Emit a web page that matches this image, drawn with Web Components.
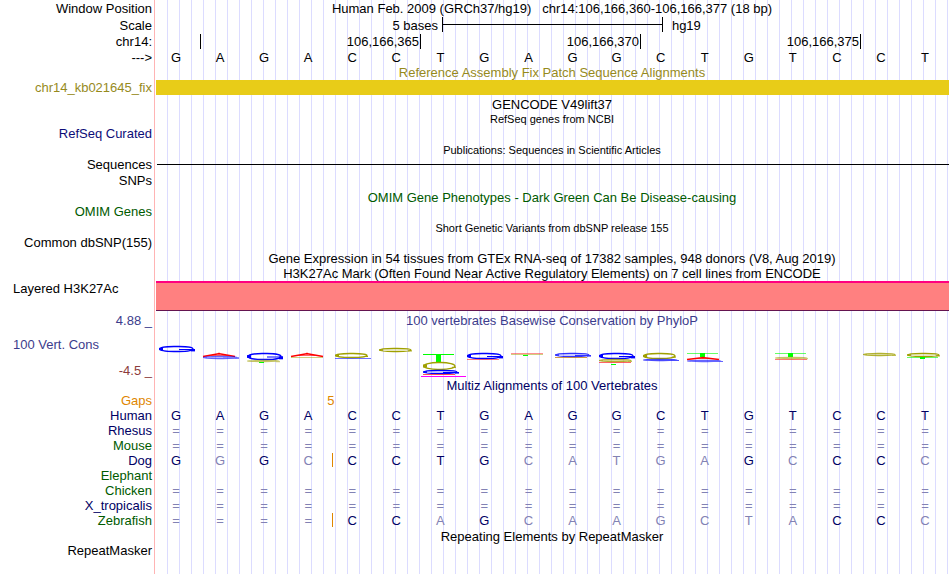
<!DOCTYPE html>
<html lang="en">
<head>
<meta charset="utf-8">
<title>Human chr14:106,166,360-106,166,377</title>
<style>
    body {
        margin: 0;
        background: #fff;
        font-family: "Liberation Sans", Arial, sans-serif;
        font-size: 13px;
    }
</style>
</head>
<body>
<genome-browser>
    <track-row label="Window Position" size="17"><track-title>Human Feb. 2009 (GRCh37/hg19) &nbsp; chr14:106,166,360-106,166,377 (18 bp)</track-title></track-row>
    <track-row label="Scale" size="17"><scale-bar left="5 bases" right="hg19"></scale-bar></track-row>
    <track-row label="chr14:" size="16"><position-ruler></position-ruler></track-row>
    <track-row label="---&gt;" size="15"><base-row bases="GAGACCTGAGGCTGTCCT" color="#000"></base-row></track-row>

    <track-row size="15"><track-title color="#968a1c">Reference Assembly Fix Patch Sequence Alignments</track-title></track-row>
    <track-row label="chr14_kb021645_fix" color="#968a1c"><track-bar kind="patch"></track-bar></track-row>
    <track-row space="2"><track-title>GENCODE V49lift37</track-title></track-row>
    <track-row><track-title small>RefSeq genes from NCBI</track-title></track-row>
    <track-row label="RefSeq Curated" color="#0c0c78" size="14"></track-row>

    <track-row space="2"><track-title small>Publications: Sequences in Scientific Articles</track-title></track-row>
    <track-row label="Sequences" size="14"><track-bar kind="line"></track-bar></track-row>
    <track-row label="SNPs" space="2" size="14"></track-row>

    <track-row space="2"><track-title color="#005a00">OMIM Gene Phenotypes - Dark Green Can Be Disease-causing</track-title></track-row>
    <track-row label="OMIM Genes" color="#005a00" size="14"></track-row>
    <track-row space="2"><track-title small>Short Genetic Variants from dbSNP release 155</track-title></track-row>
    <track-row label="Common dbSNP(155)" size="14"></track-row>

    <track-row space="2" size="14"><track-title>Gene Expression in 54 tissues from GTEx RNA-seq of 17382 samples, 948 donors (V8, Aug 2019)</track-title></track-row>
    <track-row size="15"><track-title>H3K27Ac Mark (Often Found Near Active Regulatory Elements) on 7 cell lines from ENCODE</track-title></track-row>
    <track-row label="Layered H3K27Ac" start size="15"><track-bar kind="signal"></track-bar></track-row>

    <track-row label="4.88 _" color="#3c3c8c" space="2"><track-title color="#3c3c8c">100 vertebrates Basewise Conservation by PhyloP</track-title></track-row>
    <track-row label="100 Vert. Cons" start low="-4.5 _" color="#3c3c8c"><sequence-logo></sequence-logo></track-row>

    <track-row><track-title color="#000064">Multiz Alignments of 100 Vertebrates</track-title></track-row>
    <track-row label="Gaps" color="#e08600"><gap-count column="4">5</gap-count></track-row>
    <track-row label="Human" color="#000064"><base-row bases="GAGACCTGAGGCTGTCCT"></base-row></track-row>
    <track-row label="Rhesus" color="#000064"><base-row bases="=================="></base-row></track-row>
    <track-row label="Mouse" color="#005a00"><base-row bases="=================="></base-row></track-row>
    <track-row label="Dog" color="#000064"><base-row bases="GgGcCCTGcatgaGcCCc" gap="4"></base-row></track-row>
    <track-row label="Elephant" color="#005a00"></track-row>
    <track-row label="Chicken" color="#005a00"><base-row bases="=================="></base-row></track-row>
    <track-row label="X_tropicalis" color="#000064"><base-row bases="=================="></base-row></track-row>
    <track-row label="Zebrafish" color="#005a00"><base-row bases="====CCaGcaagctaCCc" gap="4"></base-row></track-row>

    <track-row space="1"><track-title>Repeating Elements by RepeatMasker</track-title></track-row>
    <track-row label="RepeatMasker" size="14"></track-row>
</genome-browser>

<script>
const BASE_COUNT = 18;

class GenomeBrowser extends HTMLElement {
    connectedCallback() {
        this.attachShadow({mode: 'open'});
        this.shadowRoot.innerHTML = `<style>
            :host {
                --label-width: 154px;
                display: flow-root;
                box-sizing: border-box;
                min-height: 100vh;
                background:
                    linear-gradient(#ffb4b4, #ffb4b4) 154px 0 / 1px 100% no-repeat,
                    repeating-linear-gradient(90deg, transparent 0 11px, #dcdcff 11px 12px) 156px 0 no-repeat;
            }
        </style>
        <slot></slot>`;
    }
}

class TrackRow extends HTMLElement {
    connectedCallback() {
        this.attachShadow({mode: 'open'});
        this.shadowRoot.innerHTML = this.css() + this.html();
    }

    html() {
        const label = this.getAttribute('label') || '';
        const low = this.getAttribute('low');
        return `<div class="label">
            <span class="name">${label.replace('>', '&gt;')}</span>
            ${low ? `<span class="low">${low}</span>` : ''}
        </div>
        <div class="data"><slot></slot></div>`;
    }

    css() {
        const size = this.getAttribute('size') || 15;
        const space = this.getAttribute('space') || 0;
        const color = this.getAttribute('color') || '#000';
        const align = this.hasAttribute('start') ? 'left' : 'right';
        // the name of a track with an axis sits in the middle of its plot
        const top = this.hasAttribute('low') ? 9 : 0;
        return `<style>
            :host {
                display: grid;
                grid-template-columns: var(--label-width) minmax(0, 1fr);
                min-height: ${size}px;
                line-height: ${size}px;
                margin-top: ${space}px;
                white-space: nowrap;
            }
            .label {
                display: flex;
                flex-direction: column;
                justify-content: space-between;
                padding: 0 2px 0 13px;
                text-align: right;
                color: ${color};
            }
            .name {
                text-align: ${align};
                padding-top: ${top}px;
            }
            .low { color: #8c3c3c; }
        </style>`;
    }
}

class TrackTitle extends HTMLElement {
    connectedCallback() {
        this.attachShadow({mode: 'open'});
        this.shadowRoot.innerHTML = `<style>
            :host {
                display: block;
                text-align: center;
                color: ${this.getAttribute('color') || '#000'};
                font-size: ${this.hasAttribute('small') ? 11 : 13}px;
            }
        </style>
        <slot></slot>`;
    }
}

class ScaleBar extends HTMLElement {
    connectedCallback() {
        this.attachShadow({mode: 'open'});
        this.shadowRoot.innerHTML = `<style>
            :host {
                display: grid;
                grid-template-columns: minmax(0, 1fr) calc(100% * 5 / 18) minmax(0, 1fr);
                padding-left: 1px;
            }
            .left { text-align: right; padding-right: 4px; }
            .right { padding-left: 9px; }
            .bar {
                height: 15px;
                box-sizing: border-box;
                border: solid #000;
                border-width: 0 1px;
                background: linear-gradient(#000, #000) 0 7px / 100% 1px no-repeat;
            }
        </style>
        <span class="left">${this.getAttribute('left')}</span>
        <div class="bar"></div>
        <span class="right">${this.getAttribute('right')}</span>`;
    }
}

class PositionRuler extends HTMLElement {
    connectedCallback() {
        this.attachShadow({mode: 'open'});
        this.shadowRoot.innerHTML = `<style>
            :host {
                display: grid;
                grid-template-columns: repeat(${BASE_COUNT}, minmax(0, 1fr));
                padding: 0 1px 0 3px;
            }
            span {
                height: 15px;
                text-align: right;
                padding-right: 1px;
                border-right: 1px solid #000;
            }
        </style>
        <span style="grid-column: 1 / 2"></span>
        <span style="grid-column: 2 / 7">106,166,365</span>
        <span style="grid-column: 7 / 12">106,166,370</span>
        <span style="grid-column: 12 / 17">106,166,375</span>`;
    }
}

class BaseRow extends HTMLElement {
    connectedCallback() {
        this.attachShadow({mode: 'open'});
        this.shadowRoot.innerHTML = this.css() + this.html();
    }

    // lower case bases differ from human and are drawn dimmed
    html() {
        const gap = this.getAttribute('gap');
        return [...this.getAttribute('bases')].map((base, i) => {
            const classes = [];
            if (base === '=' || base !== base.toUpperCase()) classes.push('dim');
            if (gap && Number(gap) === i) classes.push('gap');
            return `<span class="${classes.join(' ')}">${base.toUpperCase()}</span>`;
        }).join('');
    }

    css() {
        return `<style>
            :host {
                display: grid;
                grid-template-columns: repeat(${BASE_COUNT}, minmax(0, 1fr));
                padding-right: 3px;
                text-align: center;
                color: ${this.getAttribute('color') || '#000064'};
            }
            span { position: relative; }
            .dim { color: #8282b4; }
            .gap::before {
                content: "";
                position: absolute;
                left: 2px;
                top: 0;
                width: 1px;
                height: 14px;
                background: #e08600;
            }
        </style>`;
    }
}

class GapCount extends HTMLElement {
    connectedCallback() {
        const column = Number(this.getAttribute('column'));
        this.attachShadow({mode: 'open'});
        this.shadowRoot.innerHTML = `<style>
            :host {
                display: grid;
                grid-template-columns: repeat(${BASE_COUNT}, minmax(0, 1fr));
                text-align: center;
                color: #e08600;
            }
            span { grid-column: ${column} / ${column + 2}; }
        </style>
        <span><slot></slot></span>`;
    }
}

class TrackBar extends HTMLElement {
    connectedCallback() {
        this.attachShadow({mode: 'open'});
        this.shadowRoot.innerHTML = `<style>
            :host { display: block; padding: 0 1px 0 2px; }
            div { box-sizing: border-box; }
            .patch { height: 15px; background: #e8cc18; }
            .line { height: 7px; margin-left: 1px; border-bottom: 1px solid #000; }
            .signal {
                height: 30px;
                background: #ff8080;
                border-top: 2px solid #ff0080;
                border-bottom: 1px solid #641450;
            }
        </style>
        <div class="${this.getAttribute('kind')}"></div>`;
    }
}

class SequenceLogo extends HTMLElement {
    // column, mark, top, bottom, opacity
    marks = [
        [0, 'G', 18, 24, 1],
        [1, 'A', 25, 29, 1], [1, 'G', 28, 31, .6],
        [2, 'G', 25, 32, 1], [2, 'C', 32, 34, .6], [2, 'T', 34, 35, 1],
        [3, 'A', 25, 29, 1], [3, 'C', 29, 30, .5],
        [4, 'C', 25, 30, 1], [4, 'G', 30, 31, .6],
        [5, 'C', 20, 24, 1],
        [6, 'T', 26, 34, 1], [6, 'C', 34, 42, 1], [6, 'G', 42, 46, 1], [6, 'A', 46, 48, .8],
        [7, 'G', 25, 31, 1], [7, 'A', 31, 33, .6],
        [8, 'A', 25, 27, .5], [8, 'C', 26, 27, .5], [8, 'T', 27, 28, 1],
        [9, 'G', 25, 29, .8], [9, 'A', 29, 30, .5], [9, 'C', 29, 30, .5],
        [10, 'G', 25, 31, 1], [10, 'C', 31, 34, .8], [10, 'A', 34, 36, .7], [10, 'T', 36, 37, 1],
        [11, 'C', 25, 31, 1], [11, 'G', 31, 33, .7],
        [12, 'T', 25, 29, 1], [12, 'A', 29, 32, 1], [12, 'G', 32, 34, .6],
        [14, 'T', 25, 29, 1], [14, 'C', 29, 31, .6], [14, 'A', 31, 32, .6],
        [16, 'C', 25, 28, .8],
        [17, 'C', 25, 29, 1], [17, 'T', 29, 31, 1]
    ]

    connectedCallback() {
        this.attachShadow({mode: 'open'});
        this.shadowRoot.innerHTML = this.css() + this.html();
    }

    mark([column, kind, top, bottom, opacity]) {
        const x = 3 + column * 44;
        const h = bottom - top;
        const draw = {A: this.peak, C: this.ring, G: this.hook, T: this.post}[kind];
        return `<g opacity="${opacity}">${draw(x, top, h)}</g>`;
    }

    peak(x, y, h) {
        if (h < 3) return `<rect x="${x}" y="${y}" width="32" height="1" fill="#f22"/>`;
        return `<g stroke="#f00" stroke-width="1.3">
            <line x1="${x}" y1="${y + h - .5}" x2="${x + 17}" y2="${y + .5}"/>
            <line x1="${x + 15}" y1="${y + .5}" x2="${x + 32}" y2="${y + h - .5}"/>
            <line x1="${x + 8}" y1="${y + h - 1.5}" x2="${x + 24}" y2="${y + h - 1.5}" stroke-width=".6"/></g>`;
    }

    ring(x, y, h) {
        if (h < 2) return `<rect x="${x}" y="${y}" width="32" height="1" fill="#a0a000"/>`;
        return `<rect x="${x + 1}" y="${y + .5}" width="31" height="${h - 1}" rx="14" ry="${h / 2 - .5}" fill="none" stroke="#a0a000" stroke-width="1.3"/>
            <rect x="${x}" y="${y + h * .3}" width="4" height="${h * .4}" fill="#a0a000"/>
            <rect x="${x + 29}" y="${y + h * .6}" width="4" height="1" fill="#a0a000"/>`;
    }

    hook(x, y, h) {
        if (h < 2) return `<rect x="${x}" y="${y}" width="36" height="1" fill="#11f"/>`;
        return `<rect x="${x + 1}" y="${y + .5}" width="33" height="${h - 1}" rx="14" ry="${h / 2 - .5}" fill="none" stroke="#00f" stroke-width="1.3"/>
            <rect x="${x}" y="${y + h * .3}" width="4" height="${h * .4}" fill="#00f"/>
            <rect x="${x + 20}" y="${y + h * .5}" width="16" height="1" fill="#00f"/>
            <rect x="${x + 32}" y="${y + h * .5}" width="4" height="${h * .4}" fill="#00f"/>`;
    }

    post(x, y, h) {
        if (h < 2) return `<rect x="${x + 12}" y="${y}" width="5" height="1" fill="#0f0"/>`;
        return `<rect x="${x}" y="${y}" width="31" height="1" fill="#0f0" opacity="${h > 6 ? 1 : .6}"/>
            <rect x="${x + 13}" y="${y}" width="5" height="${h}" fill="#0f0"/>`;
    }

    html() {
        return `<svg viewBox="0 0 793 50" preserveAspectRatio="none" role="img" aria-label="Conservation logo">
            ${this.marks.map(m => this.mark(m)).join('')}
            <rect x="265" y="48" width="45" height="1" fill="#f0f"/>
        </svg>`;
    }

    css() {
        return `<style>
            :host { display: block; padding: 0 1px 0 2px; }
            svg { display: block; width: 100%; height: 50px; }
        </style>`;
    }
}

customElements.define('genome-browser', GenomeBrowser);
customElements.define('track-row', TrackRow);
customElements.define('track-title', TrackTitle);
customElements.define('scale-bar', ScaleBar);
customElements.define('position-ruler', PositionRuler);
customElements.define('base-row', BaseRow);
customElements.define('gap-count', GapCount);
customElements.define('track-bar', TrackBar);
customElements.define('sequence-logo', SequenceLogo);
</script>
</body>
</html>
